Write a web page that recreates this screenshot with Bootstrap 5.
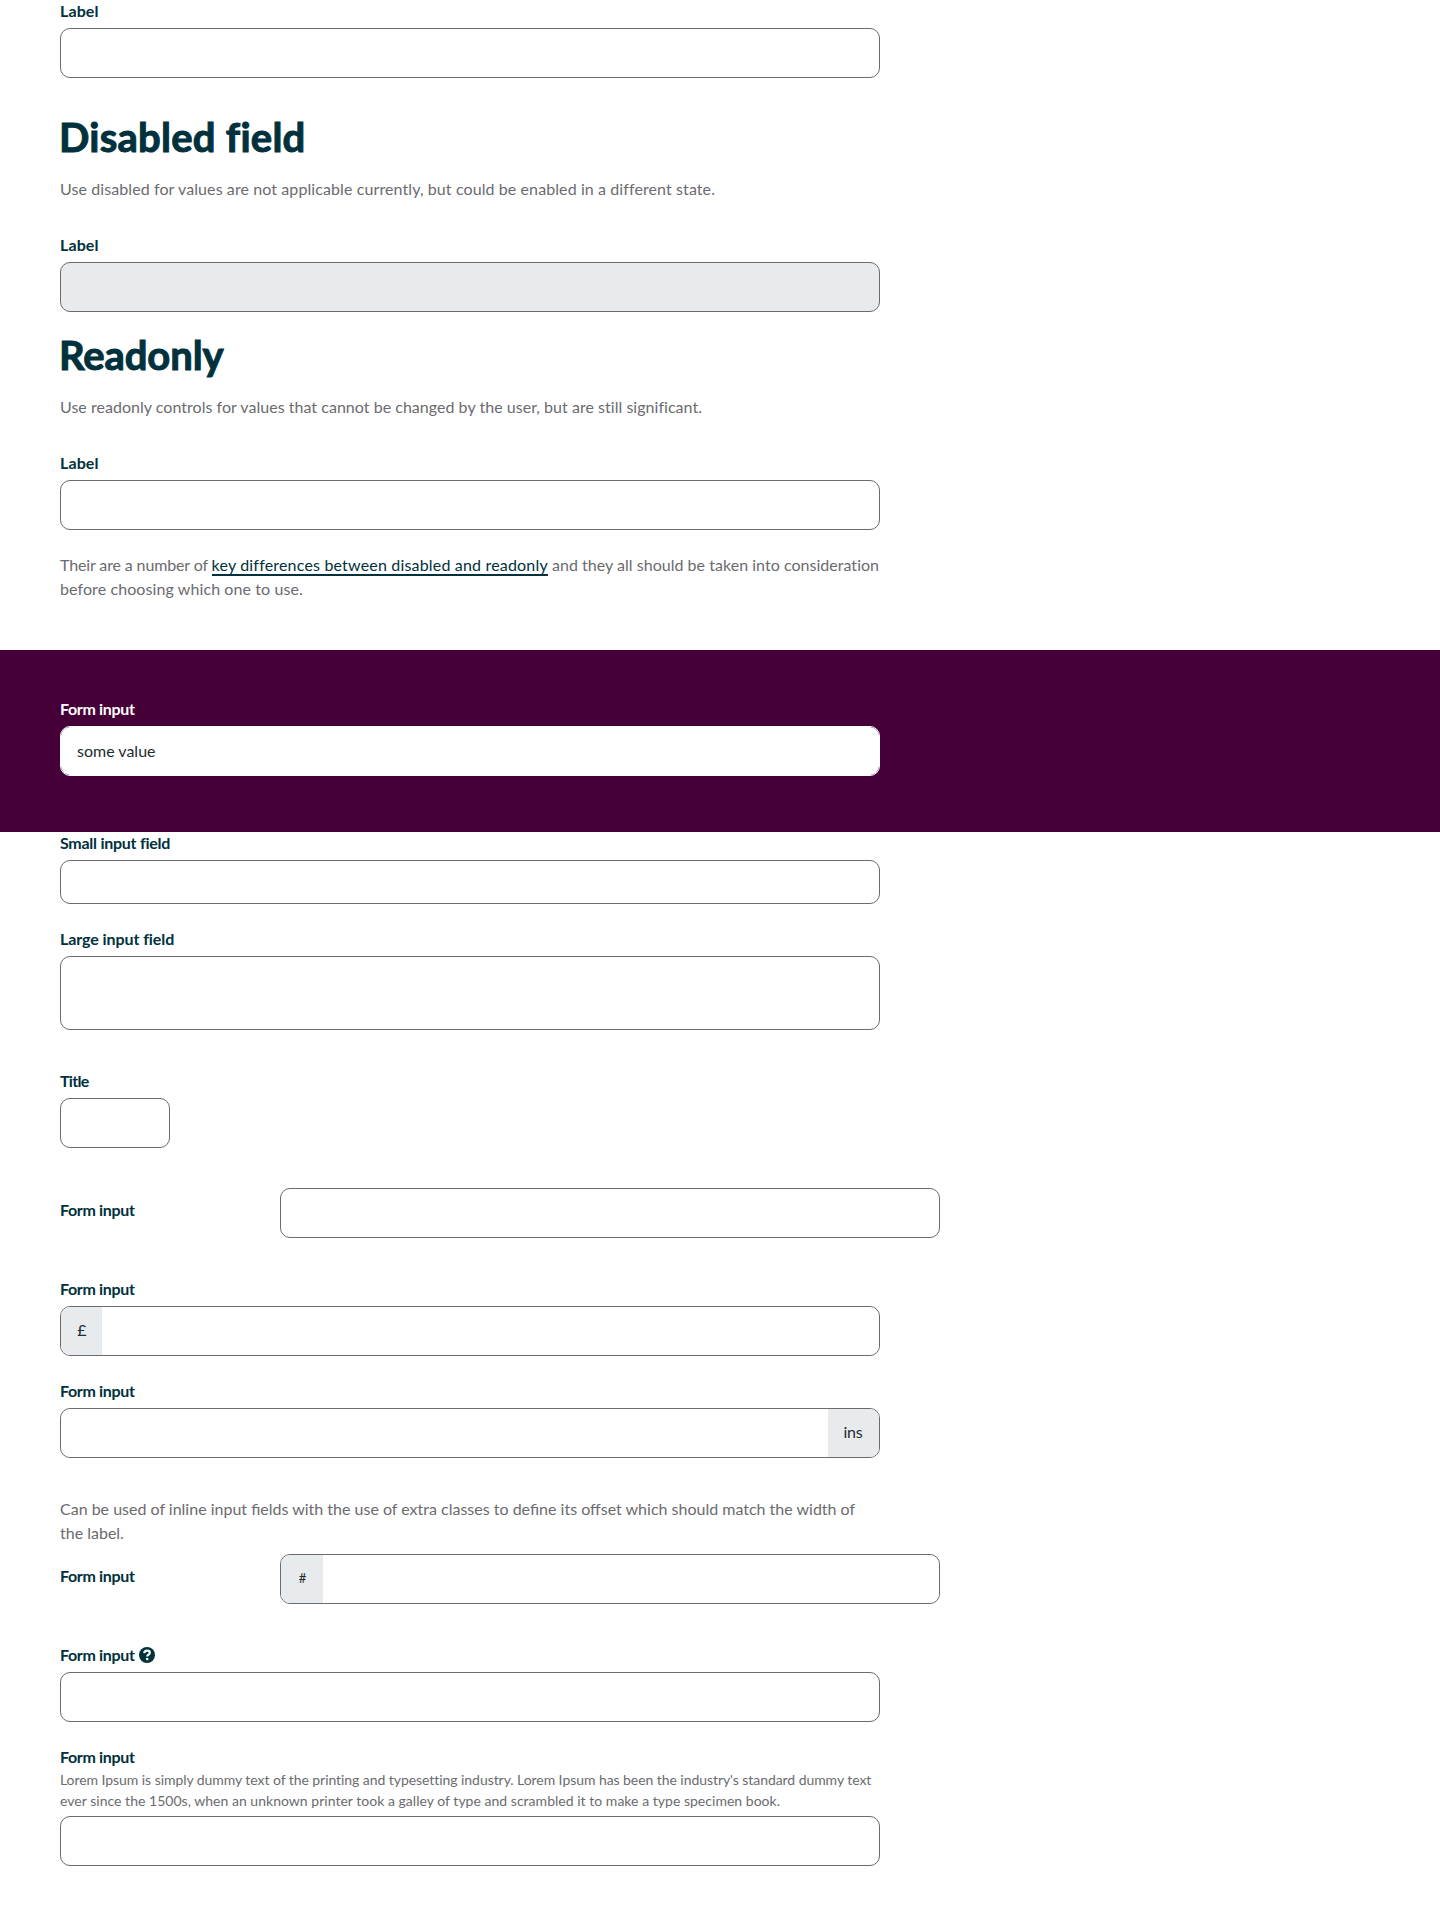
<!DOCTYPE html>
<html lang="en">
<head>
<meta charset="utf-8">
<meta name="viewport" content="width=device-width, initial-scale=1">
<title>Form inputs</title>
<link href="https://cdn.jsdelivr.net/npm/bootstrap@5.3.0/dist/css/bootstrap.min.css" rel="stylesheet">
<style>
:root { --ink: #00313c; --grey: #6b6b6f; --fill: #e8ebee; --plum: #460038; }
body { font-family: Lato, "Liberation Sans", sans-serif; color: var(--grey); font-size: 16px; line-height: 24px; }
.page-col { padding-left: 60px; }
.measure { width: 820px; }
h2 { font-size: 40px; line-height: 48px; font-weight: 700; color: var(--ink); -webkit-text-stroke: 1px var(--ink); margin-top: -1px; margin-left: -1px; }
p { margin-bottom: 0; }
.form-label { display: block; margin: 0 0 4px; height: 24px; line-height: 22px; font-weight: 700; color: var(--ink); letter-spacing: -.34px; }
.form-control { height: 50px; border: 1px solid var(--grey); border-radius: 10px; padding: 11px 16px 13px; color: #222b30; line-height: 24px; }
.form-control:disabled { background: var(--fill); }
.form-control.short { height: 44px; }
.form-control.tall { height: 74px; }
.title-field { width: 110px; }
.input-group { height: 50px; border: 1px solid var(--grey); border-radius: 10px; overflow: hidden; }
.input-group .form-control { height: 48px; border: 0; }
.input-group-text { border: 0; background: var(--fill); color: #222b30; padding: 0 0 2px; justify-content: center; }
.pre-pound { width: 42px; }
.pre-hash { width: 43px; font-size: 13px; padding: 0; }
.post-ins { width: 52px; letter-spacing: -.2px; }
.inline-row .form-label { width: 220px; flex: none; margin: 11px 0 0; }
.inline-row .inline-field { width: 660px; }
.inline-row { height: 50px; }
.plum-band { background: var(--plum); padding: 48px 0 56px 60px; }
.plum-band .form-label { color: #fff; }
.plum-band .form-control { border-color: #fff; }
.gap-49 { margin-bottom: 49px; } .gap-40 { margin-bottom: 40px; } .gap-39 { margin-bottom: 39px; } .gap-33 { margin-bottom: 33px; } .gap-36 { margin-bottom: 36px; } .gap-23 { margin-bottom: 23px; } .gap-20 { margin-bottom: 20px; } .gap-9 { margin-bottom: 9px; }
p a, p a:hover { color: var(--ink); text-decoration: none; border-bottom: 2px solid var(--ink); letter-spacing: .18px; }
.hint { font-size: 14px; line-height: 21px; margin: -5px 0 5px; white-space: nowrap; }
.t-1 { letter-spacing: .095px; } .t-2 { letter-spacing: .03px; } .t-3 { letter-spacing: -.13px; } .t-4 { letter-spacing: -.06px; } .t-5 { letter-spacing: .025px; }
.t-h { letter-spacing: .25px; } .t-r { letter-spacing: -.1px; }
.form-label.t-sm { letter-spacing: -.26px; } .form-label.t-lg { letter-spacing: -.08px; } .form-label.t-lb { letter-spacing: .1px; } .form-label.t-ti { letter-spacing: -.7px; }
.help-icon { width: 16px; height: 16px; margin-left: 4px; vertical-align: -2px; }
</style>
</head>
<body>
<main>
  <section class="page-col">
    <div class="measure">
      <div class="gap-36"><label class="form-label t-lb" for="f1">Label</label><input id="f1" class="form-control"></div>
      <h2 class="mb-3 t-h">Disabled field</h2>
      <p class="gap-33 t-1">Use disabled for values are not applicable currently, but could be enabled in a different state.</p>
      <div class="gap-20"><label class="form-label t-lb" for="f2">Label</label><input id="f2" class="form-control" disabled></div>
      <h2 class="mb-3 t-r">Readonly</h2>
      <p class="gap-33 t-2">Use readonly controls for values that cannot be changed by the user, but are still significant.</p>
      <div class="gap-23"><label class="form-label t-lb" for="f3">Label</label><input id="f3" class="form-control" readonly></div>
      <p class="gap-49 text-nowrap"><span class="t-3">Their are a number of </span><a href="#">key differences between disabled and readonly</a><span class="t-2"> and they all should be taken into consideration</span><br><span class="t-1">before choosing which one to use.</span></p>
    </div>
  </section>
  <section class="plum-band">
    <div class="measure"><label class="form-label" for="f4">Form input</label><input id="f4" class="form-control" value="some value"></div>
  </section>
  <section class="page-col">
    <div class="measure">
      <div class="mb-4"><label class="form-label t-sm" for="f5">Small input field</label><input id="f5" class="form-control short"></div>
      <div class="gap-40"><label class="form-label t-lg" for="f6">Large input field</label><input id="f6" class="form-control tall"></div>
      <div class="gap-40"><label class="form-label t-ti" for="f7">Title</label><input id="f7" class="form-control title-field"></div>
    </div>
    <div class="d-flex align-items-start inline-row gap-40"><label class="form-label" for="f8">Form input</label><input id="f8" class="form-control inline-field"></div>
    <div class="measure">
      <div class="mb-4"><label class="form-label" for="f9">Form input</label><div class="input-group flex-nowrap"><span class="input-group-text pre-pound">£</span><input id="f9" class="form-control"></div></div>
      <div class="gap-39"><label class="form-label" for="f10">Form input</label><div class="input-group flex-nowrap"><input id="f10" class="form-control"><span class="input-group-text post-ins">ins</span></div></div>
      <p class="gap-9">Can be used of inline input fields with the use of extra classes to define its offset which should match the width of the label.</p>
    </div>
    <div class="d-flex align-items-start inline-row gap-40"><label class="form-label" for="f11">Form input</label><div class="input-group flex-nowrap inline-field"><span class="input-group-text pre-hash">#</span><input id="f11" class="form-control"></div></div>
    <div class="measure">
      <div class="mb-4"><label class="form-label" for="f12">Form input<svg class="help-icon" viewBox="0 0 16 16" aria-hidden="true"><circle cx="8" cy="8" r="8" fill="#00313c"/><path d="M5.200 6.200C5.400 4.300 6.500 3.600 8.100 3.600c1.700 0 2.700.9 2.700 2.200 0 1.900-2.600 1.700-2.600 3.700" fill="none" stroke="#fff" stroke-width="2.200"/><circle cx="8.200" cy="12" r="1.350" fill="#fff"/></svg></label><input id="f12" class="form-control"></div>
      <div class="gap-40"><label class="form-label" for="f13">Form input</label>
        <div class="hint"><span class="t-4">Lorem Ipsum is simply dummy text of the printing and typesetting industry. Lorem Ipsum has been the industry's standard dummy text</span><br><span class="t-5">ever since the 1500s, when an unknown printer took a galley of type and scrambled it to make a type specimen book.</span></div>
        <input id="f13" class="form-control"></div>
    </div>
  </section>
</main>
<script src="https://cdn.jsdelivr.net/npm/bootstrap@5.3.0/dist/js/bootstrap.bundle.min.js"></script>
</body>
</html>
